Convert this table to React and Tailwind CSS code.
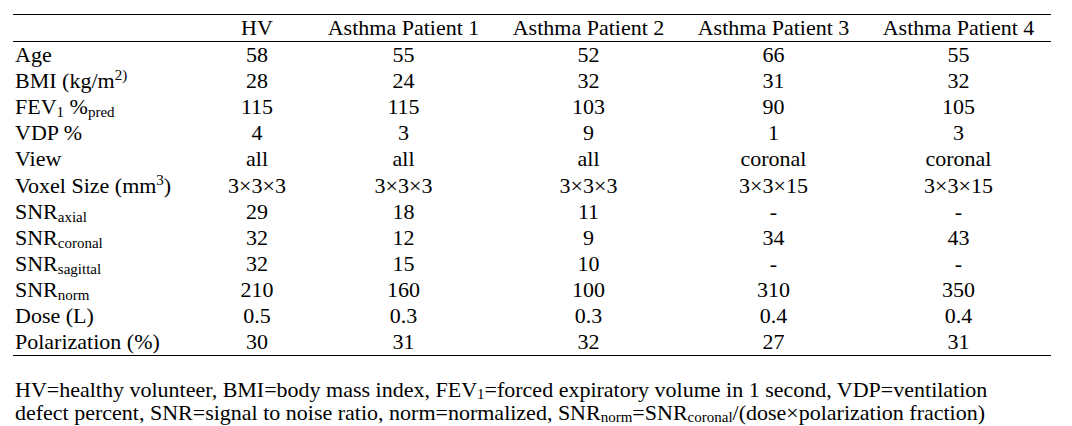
import React from "react";

const cols = ["HV", "Asthma Patient 1", "Asthma Patient 2", "Asthma Patient 3", "Asthma Patient 4"];

const Sub = ({ children }) => (
  <span className="text-[15px] leading-none relative top-[3px]">{children}</span>
);
const FSub = ({ children }) => (
  <span className="text-[15px] leading-none relative top-[2px]">{children}</span>
);
const Sup = ({ children }) => (
  <span className="text-[15px] leading-none relative top-[-8px]">{children}</span>
);

const rows = [
  [<>Age</>, ["58", "55", "52", "66", "55"]],
  [<>BMI (kg/m<Sup>2)</Sup></>, ["28", "24", "32", "31", "32"]],
  [<>FEV<Sub>1</Sub> %<Sub>pred</Sub></>, ["115", "115", "103", "90", "105"]],
  [<>VDP %</>, ["4", "3", "9", "1", "3"]],
  [<>View</>, ["all", "all", "all", "coronal", "coronal"]],
  [<>Voxel Size (mm<Sup>3</Sup>)</>, ["3×3×3", "3×3×3", "3×3×3", "3×3×15", "3×3×15"]],
  [<>SNR<Sub>axial</Sub></>, ["29", "18", "11", "-", "-"]],
  [<>SNR<Sub>coronal</Sub></>, ["32", "12", "9", "34", "43"]],
  [<>SNR<Sub>sagittal</Sub></>, ["32", "15", "10", "-", "-"]],
  [<>SNR<Sub>norm</Sub></>, ["210", "160", "100", "310", "350"]],
  [<>Dose (L)</>, ["0.5", "0.3", "0.3", "0.4", "0.4"]],
  [<>Polarization (%)</>, ["30", "31", "32", "27", "31"]],
];

export default function App() {
  return (
    <div className="w-[1072px] h-[426px] bg-white text-black overflow-hidden pt-[14px] pl-[13px] font-['Liberation_Serif','Times_New_Roman',serif]">
      <div className="w-[1038px] text-[22px]">
        <div className="border-t-[1.5px] border-b-[1.5px] border-black grid grid-cols-[190px_108px_185px_185px_185px_185px] h-[28px] items-center leading-[26px]">
          <div></div>
          {cols.map((c) => (
            <div key={c} className="text-center">{c}</div>
          ))}
        </div>
        <div className="border-b-[1.5px] border-black">
          {rows.map(([label, vals], i) => (
            <div
              key={i}
              className="grid grid-cols-[190px_108px_185px_185px_185px_185px] h-[26.1px] items-center leading-[26px]"
            >
              <div className="pl-[2px] whitespace-nowrap">{label}</div>
              {vals.map((v, j) => (
                <div key={j} className="text-center">{v}</div>
              ))}
            </div>
          ))}
        </div>
        <div className="mt-[22px] leading-[23px] pl-[2px] whitespace-nowrap">
          <div>
            HV=healthy volunteer, BMI=body mass index, FEV<FSub>1</FSub>=forced expiratory volume in 1 second, VDP=ventilation
          </div>
          <div>
            defect percent, SNR=signal to noise ratio, norm=normalized, SNR<FSub>norm</FSub>=SNR<FSub>coronal</FSub>/(dose×polarization fraction)
          </div>
        </div>
      </div>
    </div>
  );
}
